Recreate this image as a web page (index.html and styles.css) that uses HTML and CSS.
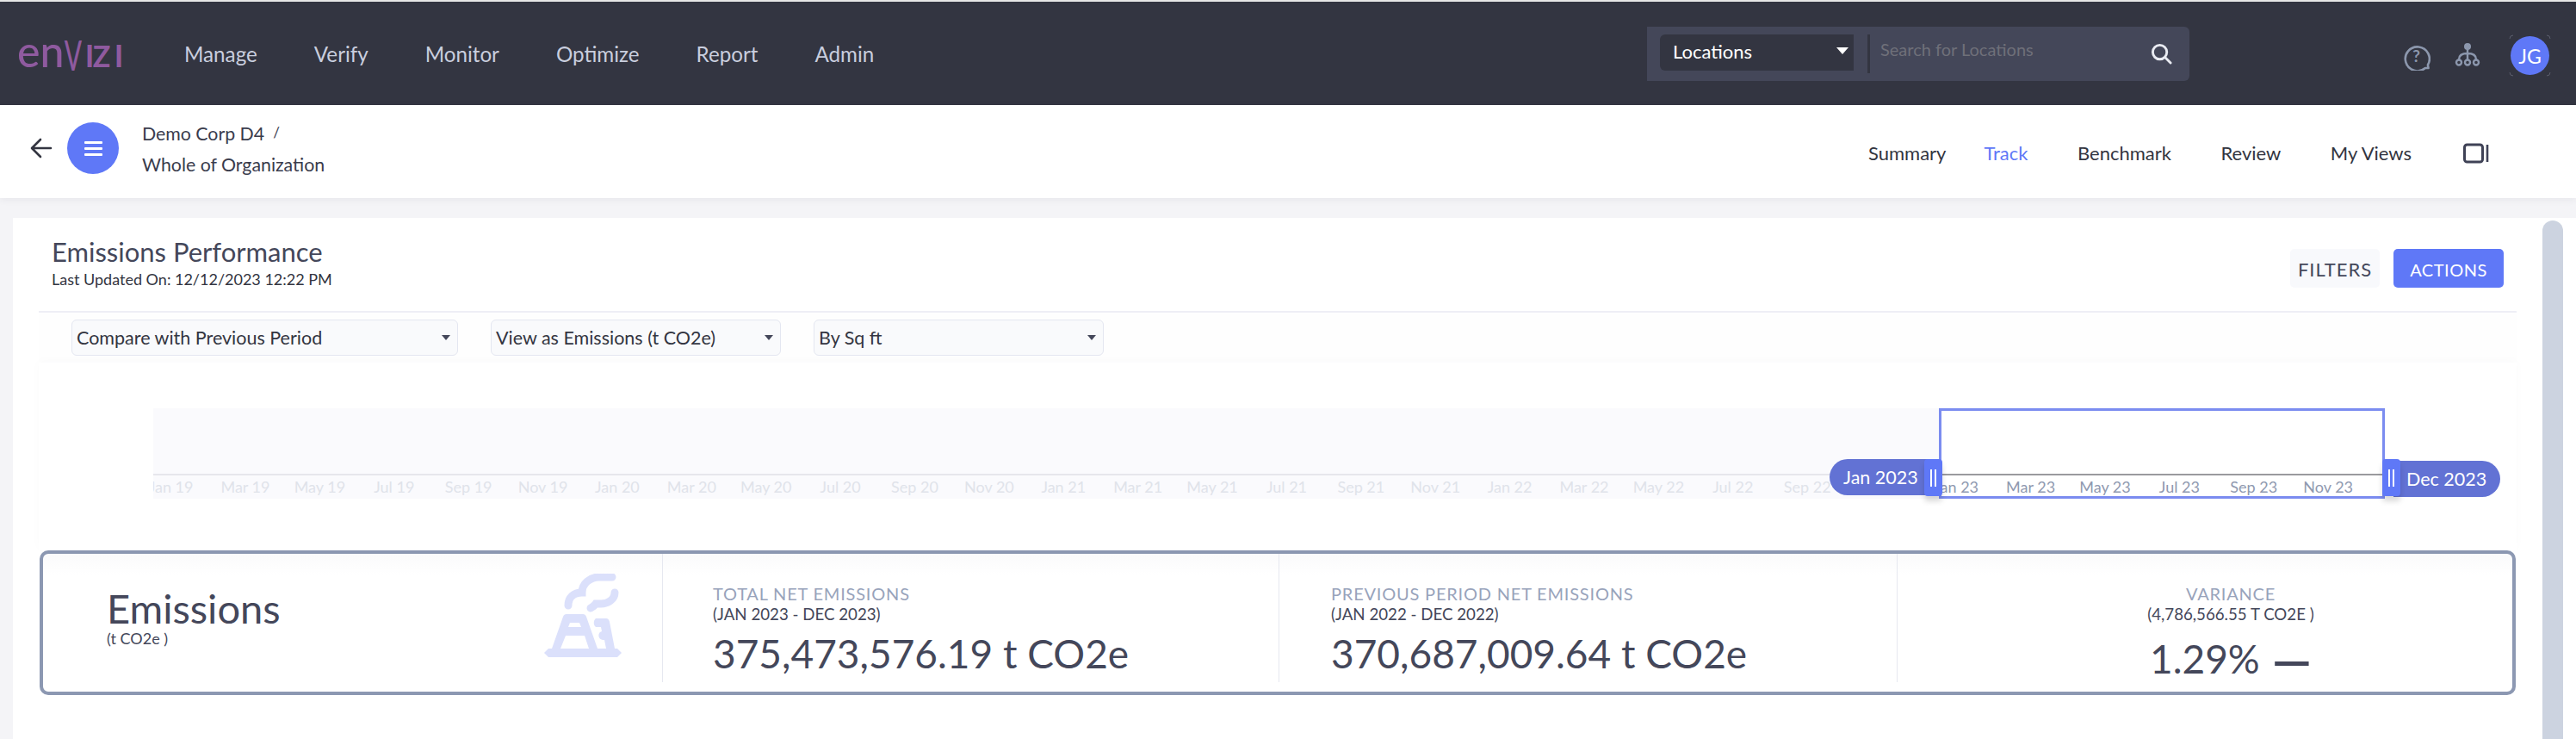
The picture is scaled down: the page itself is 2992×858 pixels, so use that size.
FILE: index.html
```html
<!DOCTYPE html>
<html lang="en">
<head>
    <meta charset="UTF-8">
    <meta name="viewport" content="width=device-width, initial-scale=1.0">
    <title>Emissions Performance</title>
    <link rel="stylesheet" href="styles.css">
</head>
<body>
    <header class="topbar">
        <div class="logo">
            <span class="logo-en">en</span><span class="logo-v">V</span><span class="logo-i">I</span><span class="logo-z">Z</span><span class="logo-i">I</span>
        </div>
        <nav class="main-nav">
            <a>Manage</a>
            <a>Verify</a>
            <a>Monitor</a>
            <a>Optimize</a>
            <a>Report</a>
            <a>Admin</a>
        </nav>
        <div class="search">
            <div class="search-type">Locations<span class="caret caret-white"></span></div>
            <div class="search-divider"></div>
            <div class="search-input">Search for Locations</div>
            <svg class="search-icon" viewBox="0 0 26 26" fill="none" stroke="#e9ebf2" stroke-width="3" stroke-linecap="round">
                <circle cx="11" cy="11" r="8.5"/>
                <path d="M17.5 17.5L24 24"/>
            </svg>
        </div>
        <svg class="help-icon" viewBox="0 0 32 32" fill="none" stroke="#8c97ad" stroke-width="2.6" stroke-linejoin="round">
            <path d="M29.5 29h-3.6a14 14 0 1 1 3-3.6z"/>
            <text x="15.5" y="21.5" text-anchor="middle" class="help-mark">?</text>
        </svg>
        <svg class="tree-icon" viewBox="0 0 30 30" fill="none" stroke="#8c97ad" stroke-width="2.4">
            <circle cx="15" cy="6" r="4" fill="#8c97ad" stroke="none"/>
            <path d="M15 9v12M15 14c-7 0-10 3-10 7M15 14c7 0 10 3 10 7"/>
            <circle cx="5" cy="24.5" r="3"/>
            <circle cx="15" cy="24.5" r="3"/>
            <circle cx="25" cy="24.5" r="3"/>
        </svg>
        <div class="avatar">
            JG
            <svg class="avatar-corners" viewBox="0 0 49 49" fill="none" stroke="#5a5d6c" stroke-width="1">
                <path d="M1 5Q1 1 5 1M44 1Q48 1 48 5M48 44Q48 48 44 48M5 48Q1 48 1 44"/>
            </svg>
        </div>
    </header>

    <div class="subbar">
        <svg class="back-icon" viewBox="0 0 26 24" fill="none" stroke="#333541" stroke-width="2.6" stroke-linecap="round" stroke-linejoin="round">
            <path d="M24 12H3M12 2L2 12l10 10"/>
        </svg>
        <div class="menu-btn"><span></span><span></span><span></span></div>
        <div class="crumbs">
            <div>Demo Corp D4<span class="crumb-sep">/</span></div>
            <div>Whole of Organization</div>
        </div>
        <nav class="tabs">
            <a class="tab-summary">Summary</a>
            <a class="active">Track</a>
            <a>Benchmark</a>
            <a>Review</a>
            <a>My Views</a>
            <svg class="panel-icon" viewBox="0 0 30 24" fill="none" stroke="#3f4256">
                <rect x="1.5" y="2" width="21" height="20" rx="3" stroke-width="3"/>
                <path d="M28 2v20" stroke-width="2.6"/>
            </svg>
        </nav>
    </div>

    <main class="card">
        <div class="card-head">
            <div>
                <h1>Emissions Performance</h1>
                <div class="updated">Last Updated On: 12/12/2023 12:22 PM</div>
            </div>
            <div class="head-actions">
                <button class="btn-filters">FILTERS</button>
                <button class="btn-actions">ACTIONS</button>
            </div>
        </div>

        <div class="filter-row">
            <div class="select select-compare">Compare with Previous Period<span class="caret"></span></div>
            <div class="select">View as Emissions (t CO2e)<span class="caret"></span></div>
            <div class="select">By Sq ft<span class="caret"></span></div>
        </div>

        <section class="chart">
            <div class="track">
                <div class="axis" id="axisAll"></div>
            </div>
            <div class="range">
                <div class="axis axis-range" id="axisRange"></div>
            </div>
            <div class="pill pill-left">Jan 2023</div>
            <div class="pill pill-right">Dec 2023</div>
            <div class="handle handle-left"><span></span><span></span></div>
            <div class="handle handle-right"><span></span><span></span></div>
        </section>

        <section class="stats">
            <div class="stat-main">
                <div>
                    <div class="stat-name">Emissions</div>
                    <div class="stat-unit">(t CO2e )</div>
                </div>
                <svg class="factory" viewBox="0 0 90 97" fill="none">
                    <g fill="#dbe0fb">
                        <path d="M5 87H85L90 92 85 97H5L0 92Z"/>
                        <path fill-rule="evenodd" d="M26 47H45Q48 47 49 50L62 87H9L22 50Q23 47 26 47ZM30 57L28 62H43L41 57ZM25 72L19 87H52L47 72Z"/>
                        <path d="M60 52H72Q75 52 76 56L82 87H72L70 77H68C62 76 62 68 67 67L66 62H60C57 60 57 54 60 52Z"/>
                    </g>
                    <g stroke="#dbe0fb" stroke-width="9" stroke-linecap="round">
                        <path d="M28 37C28 28 34 22 44 22C44 11 54 4 64 4H79"/>
                        <path d="M82 22C82 30 74 35 66 35H60C58 38 56 39 54 40"/>
                    </g>
                </svg>
            </div>
            <div class="stat stat-total">
                <div class="stat-label">TOTAL NET EMISSIONS</div>
                <div class="stat-period">(JAN 2023 - DEC 2023)</div>
                <div class="stat-value">375,473,576.19 t CO2e</div>
            </div>
            <div class="stat stat-prev">
                <div class="stat-label">PREVIOUS PERIOD NET EMISSIONS</div>
                <div class="stat-period">(JAN 2022 - DEC 2022)</div>
                <div class="stat-value">370,687,009.64 t CO2e</div>
            </div>
            <div class="stat stat-variance">
                <div class="stat-label">VARIANCE</div>
                <div class="stat-period">(4,786,566.55 T CO2E )</div>
                <div class="stat-value">1.29%<b>—</b></div>
            </div>
        </section>

        <div class="scrollbar"></div>
    </main>

    <script src="axis.js"></script>
</body>
</html>
```

FILE: axis.js
```js
// month labels under the range chart, every second month
const months = ['Jan', 'Mar', 'May', 'Jul', 'Sep', 'Nov'];

function axisLabels(from, to) {
    let html = '';
    for (let year = from; year <= to; year++) {
        months.forEach(m => {
            html += `<span>${m} ${year}</span>`;
        });
    }
    return html;
}

document.getElementById('axisAll').innerHTML = axisLabels(19, 22);
document.getElementById('axisRange').innerHTML = axisLabels(23, 23);
```

FILE: styles.css
```css
* {
    box-sizing: border-box;
}
body {
    margin: 0;
    width: 2992px;
    height: 858px;
    overflow: hidden;
    background-color: #f4f4f7;
    font-family: Lato, "Open Sans", sans-serif;
    color: #44475a;
}

/* top bar */
.topbar {
    display: flex;
    align-items: center;
    height: 122px;
    border-top: 2px solid #e6e6e6;
    background-color: #333541;
    position: relative;
}
.logo {
    display: flex;
    align-items: baseline;
    width: 214px;
    padding: 0 0 6px 20px;
    color: #8f5a9f;
    font-weight: 700;
    line-height: 1;
}
.logo-en {
    width: 55px;
    font-size: 50px;
    font-weight: 500;
}
.logo-v {
    width: 20px;
    display: flex;
    justify-content: center;
    font-size: 48px;
    font-weight: 500;
    transform: scaleX(0.62) translateY(4px);
}
.logo-i {
    width: 10px;
    display: flex;
    justify-content: center;
    font-size: 36px;
    margin-left: 4px;
}
.logo-z {
    width: 18px;
    display: flex;
    justify-content: center;
    font-size: 34px;
    margin-right: 2px;
}
.main-nav {
    display: flex;
    gap: 66px;
    font-size: 24.2px;
    color: #c9cede;
}
.search {
    position: absolute;
    left: 1913px;
    top: 29px;
    width: 630px;
    height: 63px;
    display: flex;
    align-items: flex-start;
    padding: 9px 0 0 15px;
    background-color: #444759;
    border-radius: 0 6px 6px 0;
}
.search-type {
    width: 225px;
    height: 42px;
    display: flex;
    align-items: center;
    justify-content: space-between;
    padding: 0 6px 4px 15px;
    background-color: #333541;
    border-radius: 6px 0 0 6px;
    color: #fff;
    font-size: 22px;
}
.caret {
    width: 0;
    height: 0;
    border-left: 5px solid transparent;
    border-right: 5px solid transparent;
    border-top: 6px solid #44475a;
}
.caret-white {
    border-left-width: 7px;
    border-right-width: 7px;
    border-top: 8px solid #fff;
}
.search-divider {
    width: 3px;
    height: 45px;
    margin-left: 16px;
    background-color: #333541;
}
.search-input {
    margin: 5px 0 0 12px;
    width: 314px;
    color: #6f7079;
    font-size: 20px;
}
.search-icon {
    width: 25px;
    height: 25px;
    margin-top: 10px;
}
.help-icon {
    position: absolute;
    left: 2791px;
    top: 48px;
    width: 32px;
    height: 32px;
}
.help-mark {
    fill: #8c97ad;
    stroke: none;
    font-size: 19px;
    font-weight: 700;
}
.tree-icon {
    position: absolute;
    left: 2851px;
    top: 46px;
    width: 30px;
    height: 30px;
}
.avatar {
    position: absolute;
    left: 2916px;
    top: 40px;
    width: 45px;
    height: 45px;
    display: flex;
    align-items: center;
    justify-content: center;
    border-radius: 50%;
    background-color: #5f78f7;
    color: #fff;
    font-size: 23px;
}
.avatar-corners {
    position: absolute;
    left: -2px;
    top: -2px;
    width: 49px;
    height: 49px;
}

/* breadcrumb bar */
.subbar {
    display: flex;
    align-items: flex-start;
    height: 108px;
    background-color: #fff;
    box-shadow: 0 2px 8px rgba(60, 60, 90, 0.07);
    position: relative;
    padding-left: 35px;
    color: #3a3c4d;
}
.back-icon {
    width: 26px;
    height: 24px;
    margin-top: 38px;
}
.menu-btn {
    width: 60px;
    height: 60px;
    margin: 20px 0 0 17px;
    display: flex;
    flex-direction: column;
    align-items: center;
    justify-content: center;
    gap: 4px;
    border-radius: 50%;
    background-color: #5f78f7;
}
.menu-btn span {
    width: 21px;
    height: 3px;
    border-radius: 1px;
    background-color: #fff;
}
.crumbs {
    margin: 14px 0 0 27px;
    font-size: 21.3px;
    line-height: 36px;
}
.crumb-sep {
    margin-left: 10px;
    font-size: 17px;
    vertical-align: 3px;
}
.tabs {
    position: absolute;
    left: 2170px;
    top: 42px;
    display: flex;
    align-items: center;
    gap: 57.5px;
    font-size: 22px;
    line-height: 28px;
    color: #333541;
}
.tabs .tab-summary {
    margin-right: -13.5px;
}
.tabs .active {
    color: #5f78f7;
}
.panel-icon {
    width: 30px;
    height: 24px;
    margin-left: 2px;
}

/* main card */
.card {
    position: relative;
    margin: 23px 0 0 15px;
    height: 605px;
    padding-left: 30px;
    background-color: #fff;
}
.card-head {
    display: flex;
    justify-content: space-between;
    width: 2878px;
    height: 110px;
    padding: 20px 15px 0;
    border-bottom: 2px solid #eeeef6;
}
h1 {
    margin: 0;
    font-size: 31px;
    font-weight: 400;
    line-height: 38px;
}
.updated {
    margin-top: 1px;
    font-size: 18px;
    line-height: 24px;
    color: #333541;
}
.head-actions {
    display: flex;
    align-items: flex-start;
    gap: 16px;
    padding-top: 16px;
}
button {
    height: 45px;
    padding-top: 3px;
    border: none;
    border-radius: 5px;
    font-family: inherit;
}
.btn-filters {
    width: 104px;
    background-color: #f8f9fc;
    color: #44475a;
    font-size: 22px;
    letter-spacing: 1px;
}
.btn-actions {
    width: 128px;
    background-color: #5f78f7;
    color: #fff;
    font-size: 20px;
    letter-spacing: 0.5px;
}
.filter-row {
    display: flex;
    gap: 38px;
    width: 2878px;
    height: 58px;
    padding: 8px 0 0 38px;
    background-color: #fefefe;
}
.select {
    display: flex;
    align-items: center;
    justify-content: space-between;
    width: 337px;
    height: 42px;
    padding: 0 8px 0 5px;
    background-color: #f9fafc;
    border: 1px solid #e4e7f1;
    border-radius: 6px;
    font-size: 21.5px;
    color: #333541;
}
.select-compare {
    width: 449px;
}

/* range chart, the handles and pills sit on top of it */
.chart {
    position: relative;
    width: 2878px;
    height: 218px;
    box-shadow: 0 -2px 12px rgba(60, 60, 90, 0.02);
}
.track {
    position: absolute;
    left: 133px;
    top: 53px;
    width: 2592px;
    height: 105px;
    overflow: hidden;
    background-color: #fafafd;
}
.axis {
    position: absolute;
    left: -22.6px;
    top: 76px;
    display: flex;
    width: 2700px;
    padding-top: 1px;
    border-top: 2px solid #e6e6ec;
    font-size: 18px;
    line-height: 24px;
    color: #e0e3ea;
}
.axis span {
    flex: 0 0 86.4px;
    text-align: center;
    white-space: nowrap;
}
.range {
    position: absolute;
    left: 2207px;
    top: 53px;
    width: 518px;
    height: 105px;
    overflow: hidden;
    background-color: #fff;
    border: 3px solid #7b8cf0;
}
.axis-range {
    left: -26px;
    top: 73px;
    border-top-color: #9a9a9e;
    color: #8f99b0;
}
.pill {
    position: absolute;
    display: flex;
    align-items: center;
    height: 42px;
    background-color: #6272d4;
    color: #fff;
    font-size: 21.5px;
}
.pill-left {
    left: 2080px;
    top: 112px;
    width: 120px;
    padding-left: 16px;
    border-radius: 21px 0 0 21px;
}
.pill-right {
    left: 2735px;
    top: 114px;
    width: 124px;
    padding-left: 15px;
    border-radius: 0 21px 21px 0;
}
.handle {
    position: absolute;
    top: 112px;
    width: 21px;
    height: 43px;
    display: flex;
    align-items: center;
    justify-content: center;
    gap: 3px;
    background-color: #5f78f7;
    border-radius: 4px;
    box-shadow: 0 6px 6px rgba(0, 0, 0, 0.15);
}
.handle span {
    width: 2px;
    height: 20px;
    background-color: #fff;
}
.handle-left {
    left: 2190px;
}
.handle-right {
    left: 2722px;
}

/* stat strip */
.stats {
    display: grid;
    grid-template-columns: 719px 716px 718px 1fr;
    width: 2876px;
    height: 168px;
    margin-left: 1px;
    border: 4px solid #8c98b2;
    border-radius: 10px;
    background: linear-gradient(#fafafb, #fff 24px);
}
.stat-main {
    display: flex;
    justify-content: space-between;
    height: 149px;
    padding: 35px 47px 0 74px;
}
.stat-name {
    font-size: 47px;
    line-height: 56px;
}
.stat-unit {
    margin-top: -4px;
    font-size: 18px;
    line-height: 22px;
    color: #44475a;
}
.factory {
    width: 90px;
    height: 97px;
    margin-top: -12px;
}
.stat {
    height: 149px;
    border-left: 1px solid #e6e8f0;
    padding-top: 34px;
}
.stat-total {
    padding-left: 58px;
}
.stat-prev {
    padding-left: 60px;
}
.stat-variance {
    padding-left: 60px;
    text-align: center;
}
.stat-variance b {
    display: inline-block;
    margin-left: 14px;
    font-size: 58px;
    line-height: 1;
    transform: translateY(6px);
}
.stat-label {
    font-size: 20px;
    line-height: 24px;
    letter-spacing: 0.8px;
    color: #98a3bb;
}
.stat-period {
    margin-top: 1px;
    font-size: 18.7px;
    line-height: 22px;
    color: #44475a;
}
.stat-value {
    margin-top: 7px;
    height: 56px;
    font-size: 46px;
    line-height: 56px;
    color: #44475a;
}
.scrollbar {
    position: absolute;
    left: 2938px;
    top: 3px;
    width: 24px;
    height: 602px;
    border-radius: 12px 12px 0 0;
    background-color: #ccd3e0;
}
```
